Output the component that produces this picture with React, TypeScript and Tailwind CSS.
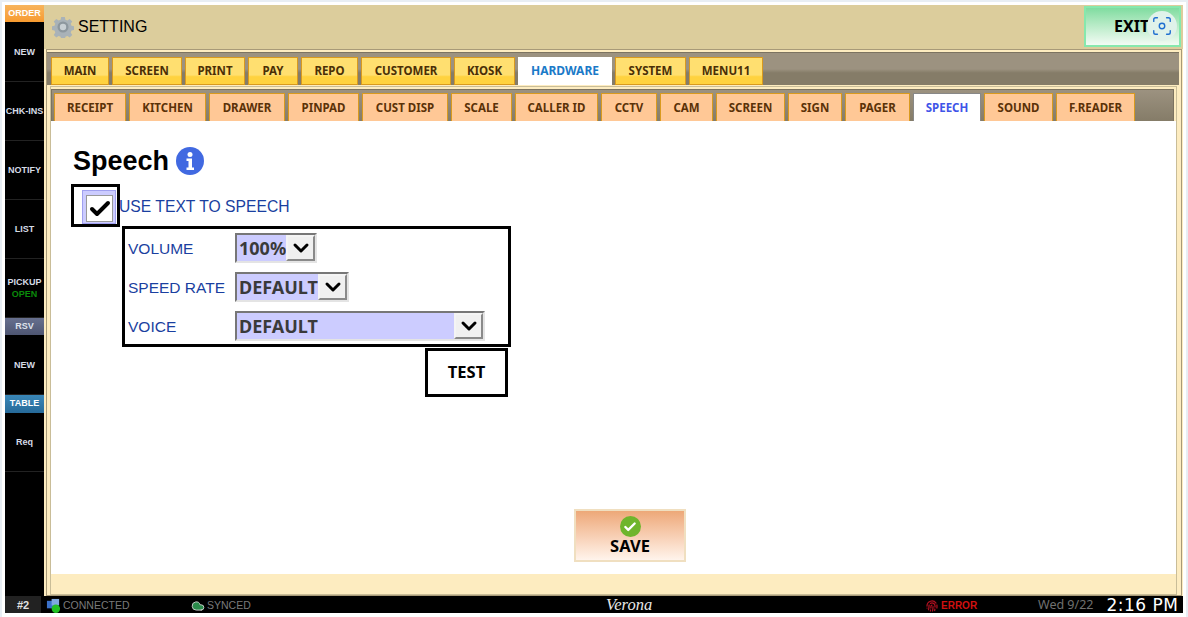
import React from 'react';
import { Check, ChevronDown, Cloud, Fingerprint, Focus } from 'lucide-react';

const mainTabs = [
  { label: 'MAIN', width: 'w-[58px]' },
  { label: 'SCREEN', width: 'w-[70px]' },
  { label: 'PRINT', width: 'w-[60px]' },
  { label: 'PAY', width: 'w-[50px]' },
  { label: 'REPO', width: 'w-[57px]' },
  { label: 'CUSTOMER', width: 'w-[90px]' },
  { label: 'KIOSK', width: 'w-[61px]' },
  { label: 'HARDWARE', width: 'w-[94px]', active: true },
  { label: 'SYSTEM', width: 'w-[71px]' },
  { label: 'MENU11', width: 'w-[74px]' },
];

const subTabs = [
  { label: 'RECEIPT', width: 'w-[72px]' },
  { label: 'KITCHEN', width: 'w-[77px]' },
  { label: 'DRAWER', width: 'w-[76px]' },
  { label: 'PINPAD', width: 'w-[71px]' },
  { label: 'CUST DISP', width: 'w-[86px]' },
  { label: 'SCALE', width: 'w-[61px]' },
  { label: 'CALLER ID', width: 'w-[83px]' },
  { label: 'CCTV', width: 'w-[56px]' },
  { label: 'CAM', width: 'w-[53px]' },
  { label: 'SCREEN', width: 'w-[69px]' },
  { label: 'SIGN', width: 'w-[54px]' },
  { label: 'PAGER', width: 'w-[65px]' },
  { label: 'SPEECH', width: 'w-[68px]', active: true },
  { label: 'SOUND', width: 'w-[69px]' },
  { label: 'F.READER', width: 'w-[79px]' },
];

const SideItem = ({ label, sub, height = 'h-[59px]' }: { label: string; sub?: string; height?: string }) => (
  <div className={`${height} flex flex-col items-center justify-center border-b border-[#222] text-[9px] leading-[12px] font-bold text-[#d5dbe6]`}>
    <div>{label}</div>
    {sub && <div className="text-[#0a8a0a]">{sub}</div>}
  </div>
);

const Gear = () => (
  <svg viewBox="0 0 24 24" className="w-[22px] h-[22px]">
    <path
      d="M10 1h4l.6 3 2.2.9 2.5-1.700 2.800 2.800-1.700 2.500.9 2.200 3 .6v4l-3 .6-.9 2.200 1.700 2.500-2.800 2.800-2.500-1.700-2.200.9-.6 3h-4l-.6-3-2.200-.9-2.500 1.700-2.800-2.800 1.700-2.500-.9-2.200-3-.6v-4l3-.6.9-2.200-1.700-2.500 2.800-2.800 2.500 1.700 2.200-.9z"
      fill="#a9b2b8"
    />
    <circle cx="12" cy="12" r="6" fill="#8d979e" />
    <circle cx="12" cy="12" r="3.500" fill="#c9d0d4" />
  </svg>
);

const InfoBadge = () => (
  <svg viewBox="0 0 28 28" className="w-[28px] h-[28px]">
    <circle cx="14" cy="14" r="14" fill="#4169e1" />
    <circle cx="14" cy="7.500" r="2.500" fill="#fff" />
    <path d="M10.500 11.500h5.500v9h2v2.500h-7.500v-2.500h2v-6.500h-2z" fill="#fff" />
  </svg>
);

const Select = ({ value, width }: { value: string; width: string }) => (
  <div className={`${width} h-[30px] flex items-stretch border-2 border-t-[#777] border-l-[#777] border-r-[#e4e4e4] border-b-[#e4e4e4] bg-[#ccccff]`}>
    <div className="flex-1 min-w-0 pl-[2px] text-[18px] leading-[27px] font-bold text-[#3a3a3a] font-['Noto_Sans',sans-serif] whitespace-nowrap">
      {value}
    </div>
    <div className="w-[29px] shrink-0 flex items-center justify-center border-2 border-t-[#f4f4f4] border-l-[#f4f4f4] border-r-[#8a8a8a] border-b-[#8a8a8a] bg-[#f0f0f0]">
      <ChevronDown size={24} strokeWidth={3} color="#000" />
    </div>
  </div>
);

const FormRow = ({ label, value, width }: { label: string; value: string; width: string }) => (
  <div className="flex items-center h-[30px]">
    <div className="w-[107px] pt-[1px] text-[15.5px] text-[#1a3fa0]">{label}</div>
    <Select value={value} width={width} />
  </div>
);

export default function App() {
  return (
    <div className="w-[1188px] h-[617px] bg-white border-t-2 border-x-2 border-[#e8eef4] pt-[3px] pl-[3px] pr-[3px] pb-[4px] font-['Liberation_Sans',sans-serif] flex flex-col overflow-hidden relative">
      <div className="flex-1 flex min-h-0">
        {/* Sidebar */}
        <div className="w-[39px] bg-black flex flex-col">
          <div className="h-[17px] bg-gradient-to-b from-[#f7b45c] to-[#f79a2e] text-white text-[9px] font-bold flex items-center justify-center">
            ORDER
          </div>
          <SideItem label="NEW" height="h-[60px]" />
          <SideItem label="CHK-INS" />
          <SideItem label="NOTIFY" />
          <SideItem label="LIST" />
          <SideItem label="PICKUP" sub="OPEN" />
          <div className="h-[17px] bg-gradient-to-b from-[#666f8e] to-[#4e5672] text-[#dfe3ec] text-[9px] font-bold flex items-center justify-center">
            RSV
          </div>
          <SideItem label="NEW" height="h-[60px]" />
          <div className="h-[18px] bg-gradient-to-b from-[#3a87b8] to-[#266a99] text-white text-[9px] font-bold flex items-center justify-center">
            TABLE
          </div>
          <SideItem label="Req" />
        </div>

        {/* Main */}
        <div className="flex-1 flex flex-col bg-[#fdecc0] min-w-0">
          <div className="h-[44px] bg-[#dccd9c] flex items-center justify-between pl-[8px] pr-[2px]">
            <div className="flex items-center gap-[4px]">
              <Gear />
              <span className="text-[16px] text-black">SETTING</span>
            </div>
            <div className="w-[97px] h-[41px] mb-[2px] border-2 border-[#86e8ad] bg-gradient-to-b from-[#7fdca0] to-[#f2fbf4] flex items-center pl-[28px] text-[16px] font-bold text-black font-['Noto_Sans',sans-serif]">
              EXIT
            </div>
          </div>

          <div className="flex-1 min-h-0 flex flex-col ml-[2px] mr-[1px] border border-[#a89a78] pt-[2px] pr-[2px]">
            {/* Main tab bar */}
            <div className="h-[33px] flex items-end gap-[3px] pl-[4px] bg-[linear-gradient(#9c9280_50%,#857c68_62%)] border-t border-[#7c7360]">
              {mainTabs.map((tab) => (
                <div
                  key={tab.label}
                  className={`${tab.width} h-[28px] flex items-center justify-center font-bold font-['Noto_Sans',sans-serif] ${
                    tab.active
                      ? 'bg-white text-[12px] text-[#1a7ac8]'
                      : 'bg-[linear-gradient(#ffdf70_65%,#ffd23f_72%)] text-[11.5px] border border-[#d99a1e] text-[#4a2f06]'
                  }`}
                >
                  {tab.label}
                </div>
              ))}
            </div>

            <div className="flex-1 min-h-0 flex flex-col mt-[1px] ml-[3px] mr-[2px] border border-[#c9bd98] pt-[2px]">
              {/* Sub tab bar */}
              <div className="h-[32px] flex items-end gap-[3px] pl-[2px] mr-[2px] bg-gradient-to-b from-[#9c9280] to-[#857c68] border border-b-0 border-[#7c7360]">
                {subTabs.map((tab) => (
                  <div
                    key={tab.label}
                    className={`${tab.width} h-[28px] flex items-center justify-center text-[11.5px] font-bold font-['Noto_Sans',sans-serif] ${
                      tab.active
                        ? 'bg-white border-t border-x border-[#888] text-[#3f55e8]'
                        : 'bg-[#ffc896] border-t border-r border-l border-[#d99a1e] text-[#5a3208]'
                    }`}
                  >
                    {tab.label}
                  </div>
                ))}
              </div>

              {/* Page */}
              <div className="h-[453px] bg-white flex flex-col pl-[21px] relative">
                <div className="flex items-center gap-[7px] mt-[25px] h-[30px] pl-[1px]">
                  <h1 className="text-[27px] font-bold text-black leading-none">Speech</h1>
                  <InfoBadge />
                </div>

                <div className="flex items-center mt-[8px] -ml-[1px]">
                  <div className="w-[49px] h-[43px] border-[3px] border-black pl-[8px] pt-[3px]">
                    <div className="w-[34px] h-[34px] bg-[#ccccff] border border-[#a0a0f0] pl-[3px] pt-[4px]">
                      <div className="w-[27px] h-[27px] bg-white border border-[#999] flex items-center justify-center">
                        <Check size={24} strokeWidth={4} color="#000" />
                      </div>
                    </div>
                  </div>
                  <span className="text-[15.7px] text-[#1a3fa0] -ml-[1px] mt-[3px]">USE TEXT TO SPEECH</span>
                </div>

                <div className="w-[389px] h-[121px] ml-[50px] -mt-[1px] border-[3px] border-black pl-[3px] pt-[4px] flex flex-col gap-[9px]">
                  <FormRow label="VOLUME" value="100%" width="w-[82px]" />
                  <FormRow label="SPEED RATE" value="DEFAULT" width="w-[114px]" />
                  <FormRow label="VOICE" value="DEFAULT" width="w-[250px]" />
                </div>

                <div className="w-[83px] h-[49px] ml-[353px] mt-[1px] border-[3px] border-black flex items-center justify-center text-[16.5px] font-bold text-black font-['Noto_Sans',sans-serif]">
                  TEST
                </div>

                <div className="w-[112px] h-[53px] ml-[502px] mt-[112px] border-2 border-[#f0dfc0] bg-gradient-to-b from-[#eda878] to-[#fff4ec] flex flex-col items-center justify-center pb-[1px]">
                  <div className="w-[21px] h-[21px] rounded-full bg-[#6fb52c] flex items-center justify-center">
                    <Check size={14} strokeWidth={4} color="#fff" />
                  </div>
                  <div className="text-[16.5px] leading-[17px] font-bold text-black font-['Noto_Sans',sans-serif]">SAVE</div>
                </div>
              </div>
            </div>
          </div>
        </div>
      </div>

      {/* Status bar */}
      <div className="h-[17px] bg-black flex items-center pt-[2px] text-[10.5px] text-[#7a7a7a]">
        <div className="w-[36px] -mt-[2px] h-[17px] bg-[#222] flex items-center justify-center pt-[2px] text-[11px] font-bold text-[#e0e0e0]">#2</div>
        <div className="w-[150px] flex items-center pl-[5px] gap-[2px]">
          <svg viewBox="0 0 16 16" className="w-[15px] h-[15px]">
            <rect x="1" y="3" width="9" height="8" fill="#3a70c8" />
            <rect x="6" y="1" width="8" height="7" fill="#7fa8e0" />
            <circle cx="10.500" cy="11.500" r="4.500" fill="#22c022" />
          </svg>
          <span>CONNECTED</span>
        </div>
        <div className="w-[415px] flex items-center gap-[2px]">
          <Cloud size={14} fill="#2a8a4a" color="#d8d8d8" strokeWidth={1.5} />
          <span>SYNCED</span>
        </div>
        <div className="w-[320px] text-[16.5px] leading-none text-[#e8e8e8] italic font-['Liberation_Serif',serif]">Verona</div>
        <div className="w-[112px] flex items-center gap-[3px] text-[10px] text-[#d01010] font-bold">
          <Fingerprint size={12} color="#b01020" strokeWidth={2.5} />
          <span>ERROR</span>
        </div>
        <div className="text-[12.5px] text-[#707070] font-['Noto_Sans',sans-serif]">Wed 9/22</div>
        <div className="ml-[13px] text-[17px] leading-none text-white tracking-[0.5px] font-['DejaVu_Sans',sans-serif]">2:16 PM</div>
      </div>

      {/* Capture overlay */}
      <div className="absolute left-[1145px] top-[9px] w-[30px] h-[30px] rounded-full bg-[#e0f2ea] flex items-center justify-center">
        <Focus size={22} color="#1f6fd0" strokeWidth={1.5} />
      </div>
    </div>
  );
}
